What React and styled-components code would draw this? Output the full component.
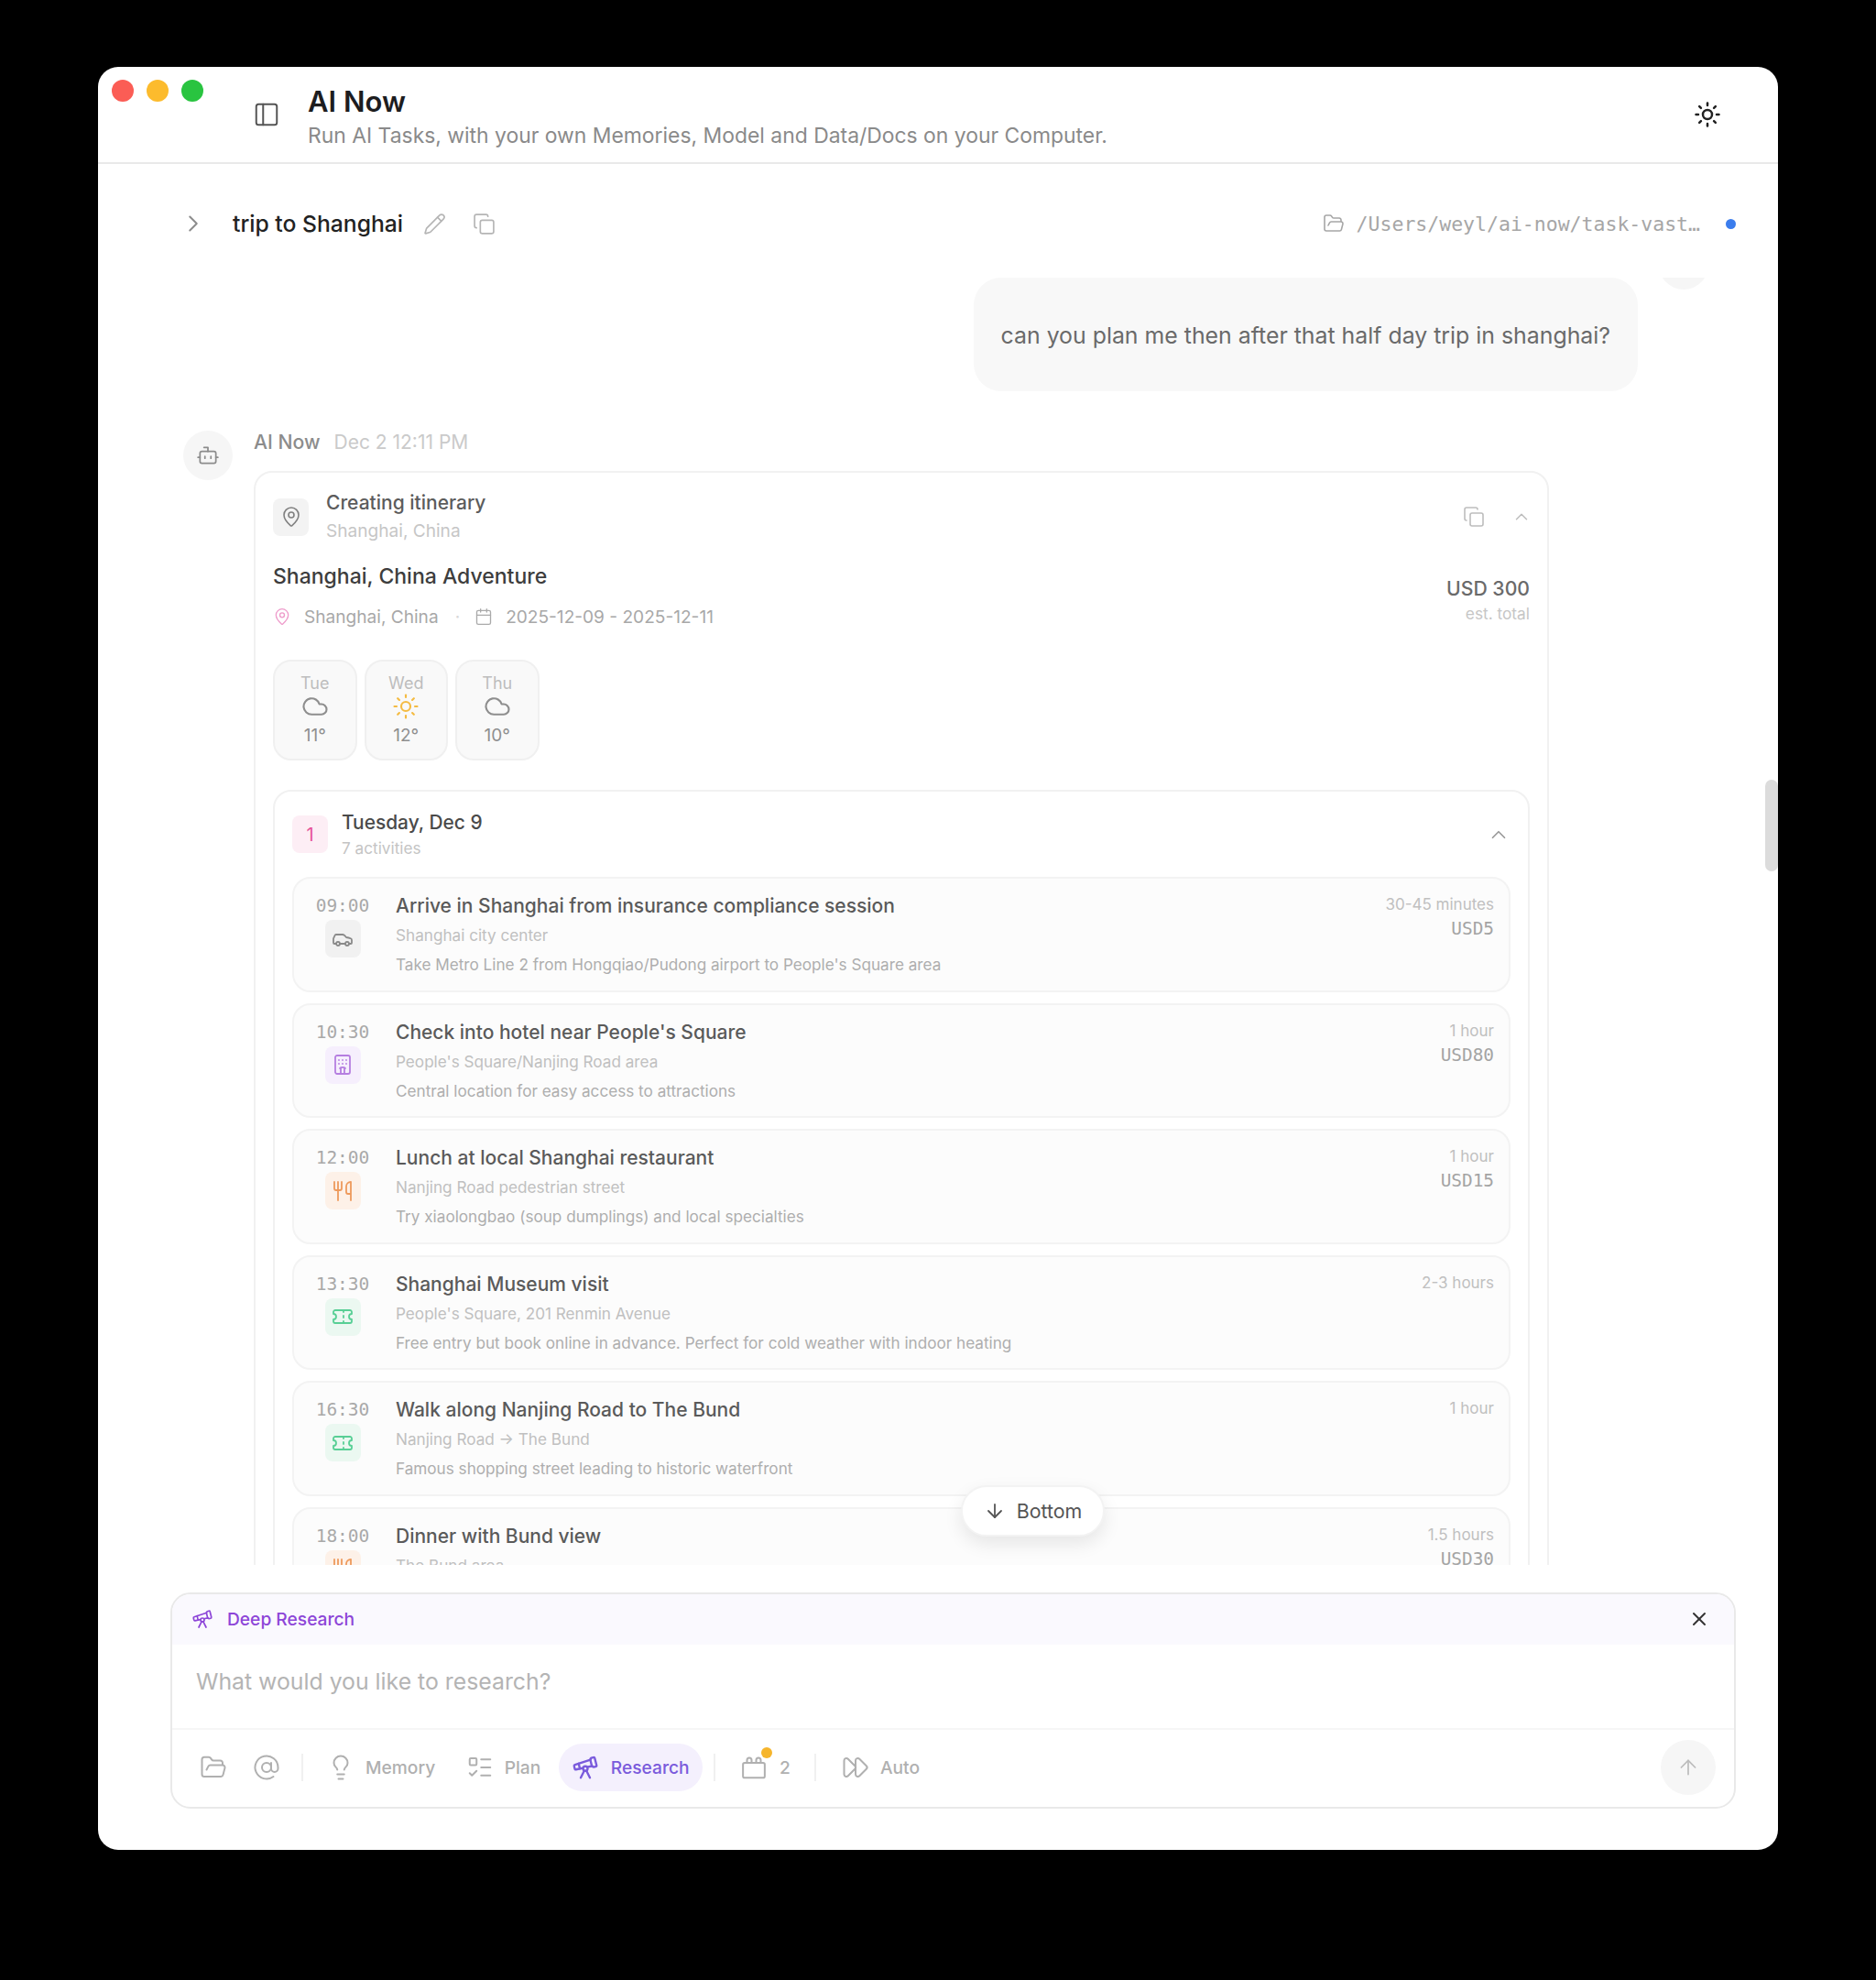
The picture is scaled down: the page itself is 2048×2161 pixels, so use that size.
import styled, { createGlobalStyle } from "styled-components";
import {
  ArrowDown,
  ArrowUp,
  AtSign,
  Bot,
  Calendar,
  Car,
  ChevronRight,
  ChevronUp,
  Cloud,
  Copy,
  FastForward,
  FolderOpen,
  Hotel,
  Lightbulb,
  ListTodo,
  MapPin,
  PanelLeft,
  Pencil,
  Sun,
  Telescope,
  Ticket,
  Utensils,
  X,
} from "lucide-react";

const MONO = `"DejaVu Sans Mono", "Liberation Mono", monospace`;

const GlobalStyle = createGlobalStyle`
  html, body {
    margin: 0;
    background: #000;
  }
  body {
    font-family: Inter, "Liberation Sans", sans-serif;
    -webkit-font-smoothing: antialiased;
  }
  * {
    box-sizing: border-box;
  }
`;

const Page = styled.div`
  width: 2048px;
  height: 2161px;
  padding: 73px 107px 142px;
`;

const Window = styled.div`
  display: flex;
  flex-direction: column;
  height: 100%;
  background: #fff;
  border-radius: 22px;
  overflow: hidden;
`;

const TopBar = styled.header`
  display: flex;
  align-items: center;
  flex: none;
  height: 106px;
  padding-right: 62px;
  border-bottom: 2px solid #e9e9e9;
`;

const Lights = styled.div`
  display: flex;
  align-self: flex-start;
  gap: 14px;
  width: 169px;
  padding: 14px 0 0 15px;
`;

const Light = styled.span`
  width: 24px;
  height: 24px;
  border-radius: 50%;
  background: ${(p) => p.$color};
`;

const SideToggle = styled.div`
  display: flex;
  width: 60px;
  color: #555;
`;

const TitleBlock = styled.div`
  flex: 1;
  padding-top: 5px;
`;

const AppTitle = styled.h1`
  margin: 0;
  font-size: 31px;
  line-height: 40px;
  font-weight: 600;
  color: #1d1d1f;
`;

const AppSubtitle = styled.p`
  margin: 0;
  font-size: 22.9px;
  line-height: 34px;
  color: #8a8a8a;
`;

const TaskBar = styled.div`
  display: flex;
  align-items: center;
  flex: none;
  height: 124px;
  padding: 6px 46px 0 89px;
`;

const TaskTitle = styled.span`
  margin-left: 28px;
  font-size: 24.7px;
  font-weight: 500;
  color: #222;
`;

const TaskTool = styled.span`
  display: flex;
  margin-left: ${(p) => p.$gap}px;
  color: #b5b5b5;
`;

const PathBox = styled.div`
  display: flex;
  align-items: center;
  gap: 13px;
  margin-left: auto;
  color: #a6a6a6;
`;

const PathText = styled.span`
  font-family: ${MONO};
  font-size: 21.5px;
`;

const StatusDot = styled.span`
  width: 11px;
  height: 11px;
  margin-left: 28px;
  border-radius: 50%;
  background: #3b7ded;
`;

const ChatArea = styled.div`
  position: relative;
  flex: none;
  height: 1405px;
`;

const Scroller = styled.div`
  height: 100%;
  padding: 0 76px 0 93px;
  overflow: hidden;
`;

const UserRow = styled.div`
  display: flex;
  justify-content: flex-end;
  gap: 23px;
`;

const Bubble = styled.div`
  display: flex;
  align-items: center;
  height: 124px;
  padding: 2px 30px 0;
  border-radius: 30px;
  background: #f8f8f8;
  font-size: 24.85px;
  color: #6a6a6a;
`;

const Avatar = styled.div`
  display: flex;
  align-items: center;
  justify-content: center;
  flex: none;
  width: 54px;
  height: 54px;
  border-radius: 50%;
  background: #f6f6f6;
  color: #8c8c8c;
`;

const UserAvatar = styled(Avatar)`
  margin-top: -41px;
`;

const BotRow = styled.div`
  display: flex;
  gap: 23px;
  margin-top: 43px;
`;

const BotBody = styled.div`
  width: 1414px;
`;

const Sender = styled.div`
  display: flex;
  align-items: center;
  gap: 15px;
  height: 30px;
  margin: -3px 0 17px;
`;

const SenderName = styled.span`
  font-size: 21.2px;
  font-weight: 500;
  color: #8c8c8c;
`;

const SenderTime = styled.span`
  font-size: 21px;
  color: #cacaca;
`;

const ItineraryCard = styled.div`
  padding: 18px 19px 0;
  border: 2px solid #f1f1f1;
  border-radius: 20px;
`;

const CardHead = styled.div`
  display: flex;
  align-items: center;
  gap: 19px;
  height: 60px;
`;

const IconBox = styled.div`
  display: flex;
  align-items: center;
  justify-content: center;
  flex: none;
  width: 39px;
  height: 41px;
  border-radius: 8px;
  background: ${(p) => p.$bg || "#f3f3f3"};
  color: ${(p) => p.$color || "#808080"};
`;

const HeadText = styled.div`
  flex: 1;
`;

const HeadTitle = styled.div`
  font-size: 21px;
  line-height: 30px;
  font-weight: 500;
  color: #5c5c5c;
`;

const HeadSub = styled.div`
  font-size: 19.1px;
  line-height: 30px;
  color: #c6c6c6;
`;

const HeadTools = styled.div`
  display: flex;
  align-items: center;
  gap: 29px;
  margin-right: -2px;
  color: #bdbdbd;
`;

const TripRow = styled.div`
  display: flex;
  justify-content: space-between;
  margin-top: 18px;
`;

const TripTitle = styled.div`
  font-size: 23px;
  line-height: 34px;
  font-weight: 500;
  color: #3d3d3d;
`;

const TripMeta = styled.div`
  display: flex;
  align-items: center;
  height: 32px;
  margin-top: 11px;
  font-size: 19.1px;
  color: #a8a8a8;
`;

const MetaDot = styled.span`
  margin: 0 16px 0 18px;
  color: #d8d8d8;
`;

const MetaIcon = styled.span`
  display: flex;
  margin-right: 14px;
  color: ${(p) => p.$color};
`;

const PriceBlock = styled.div`
  margin-top: 16px;
  text-align: right;
`;

const Price = styled.div`
  font-size: 21.2px;
  line-height: 28px;
  font-weight: 500;
  color: #6a6a6a;
`;

const PriceNote = styled.div`
  margin-top: 1px;
  font-size: 17.3px;
  line-height: 26px;
  color: #c6c6c6;
`;

const WeatherRow = styled.div`
  display: flex;
  gap: 8px;
  margin-top: 31px;
`;

const WeatherCard = styled.div`
  display: flex;
  flex-direction: column;
  align-items: center;
  width: 91.5px;
  height: 110px;
  padding-top: 13px;
  border: 2px solid #f0f0f0;
  border-radius: 20px;
  background: #f9f9f9;
`;

const WeatherDay = styled.span`
  font-size: 18px;
  line-height: 22px;
  color: #bdbdbd;
`;

const WeatherIcon = styled.span`
  display: flex;
  height: 30px;
  margin-top: -1px;
  color: ${(p) => p.$color};
`;

const WeatherTemp = styled.span`
  margin-top: 4px;
  font-size: 19px;
  line-height: 26px;
  color: #8f8f8f;
`;

const DayCard = styled.div`
  margin-top: 32px;
  padding: 0 19px;
  border: 2px solid #f1f1f1;
  border-radius: 20px;
`;

const DayHead = styled.div`
  display: flex;
  align-items: center;
  gap: 15px;
  height: 93px;
`;

const DayBadge = styled.div`
  display: flex;
  align-items: center;
  justify-content: center;
  flex: none;
  width: 39px;
  height: 41px;
  border-radius: 8px;
  background: #fdeef5;
  font-size: 20px;
  color: #e6559a;
`;

const DayText = styled.div`
  flex: 1;
`;

const DayTitle = styled.div`
  font-size: 20.9px;
  line-height: 30px;
  font-weight: 500;
  color: #4a4a4a;
`;

const DaySub = styled.div`
  font-size: 17.2px;
  line-height: 26px;
  color: #c4c4c4;
`;

const DayChevron = styled.span`
  display: flex;
  color: #9a9a9a;
`;

const ActivityList = styled.div`
  display: flex;
  flex-direction: column;
  gap: 12px;
`;

const Activity = styled.div`
  display: flex;
  gap: 28px;
  height: 125.6px;
  padding: 14px 16px 0 23px;
  border: 2px solid #f3f3f3;
  border-radius: 20px;
  background: #fcfcfc;
`;

const TimeCol = styled.div`
  display: flex;
  flex-direction: column;
  align-items: center;
  flex: none;
  width: 60px;
`;

const Time = styled.div`
  height: 32px;
  margin-bottom: -1px;
  font-family: ${MONO};
  font-size: 19.5px;
  line-height: 32px;
  color: #a9a9a9;
`;

const ActivityMain = styled.div`
  flex: 1;
  min-width: 0;
`;

const ActivityTitle = styled.div`
  font-size: 21px;
  line-height: 32px;
  font-weight: 500;
  color: #5a5a5a;
`;

const ActivityLine = styled.div`
  font-size: 17.15px;
  line-height: 32px;
  color: ${(p) => p.$color};
`;

const ActivitySide = styled.div`
  text-align: right;
`;

const Duration = styled.div`
  font-size: 17px;
  line-height: 28px;
  color: #c0c0c0;
`;

const Cost = styled.div`
  font-family: ${MONO};
  font-size: 19.4px;
  line-height: 26px;
  color: #a4a4a4;
`;

const BottomButton = styled.button`
  position: absolute;
  left: 942px;
  bottom: 31px;
  display: flex;
  align-items: center;
  justify-content: center;
  gap: 12px;
  width: 157px;
  height: 56px;
  padding: 0;
  border: 2px solid #f3f3f3;
  border-radius: 28px;
  background: #fff;
  box-shadow: 0 8px 20px rgba(0, 0, 0, 0.09);
  font-family: inherit;
  font-size: 21.4px;
  color: #555;
`;

const ScrollThumb = styled.div`
  position: absolute;
  top: 548px;
  right: 0;
  width: 14px;
  height: 100px;
  border-radius: 7px;
  background: #dcdcdc;
`;

const Composer = styled.div`
  flex: none;
  height: 236px;
  margin: 30px 46px 0 79px;
  border: 2px solid #e9e9e9;
  border-radius: 22px;
  overflow: hidden;
`;

const ModeBar = styled.div`
  display: flex;
  align-items: center;
  height: 55px;
  padding: 0 26px 2px 21px;
  background: #faf9fe;
  color: #8d46d8;
`;

const ModeLabel = styled.span`
  flex: 1;
  margin-left: 15px;
  font-size: 19.2px;
  font-weight: 500;
`;

const CloseIcon = styled.span`
  display: flex;
  color: #333;
`;

const InputArea = styled.div`
  display: flex;
  align-items: center;
  height: 93px;
  padding: 0 26px 11px;
  border-bottom: 2px solid #f6f6f6;
  font-size: 24.8px;
  color: #b4b4b4;
`;

const ToolBar = styled.div`
  display: flex;
  align-items: center;
  gap: 5.5px;
  height: 84px;
  padding: 0 20px 2px 18.5px;
`;

const IconTool = styled.span`
  display: flex;
  justify-content: center;
  width: 52.5px;
  color: #b0b0b0;
`;

const ToolDivider = styled.span`
  width: 2px;
  height: 30px;
  margin: 0 ${(p) => p.$right || 6.5}px 0 ${(p) => p.$left || 6.5}px;
  background: #f0f0f0;
`;

const Tool = styled.div`
  position: relative;
  display: flex;
  align-items: center;
  gap: ${(p) => p.$gap || 12}px;
  height: 52px;
  padding: 0 14px;
  border-radius: 26px;
  font-size: 19.2px;
  font-weight: 500;
  background: ${(p) => (p.$active ? "#f4f0fd" : "transparent")};
  color: ${(p) => (p.$active ? "#7a5bdc" : "#b0b0b0")};
`;

const ToolBadge = styled.span`
  position: absolute;
  top: 4px;
  left: 37px;
  width: 12px;
  height: 12px;
  border-radius: 50%;
  background: #f6b52c;
`;

const SendButton = styled.div`
  display: flex;
  align-items: center;
  justify-content: center;
  width: 60px;
  height: 60px;
  margin-left: auto;
  border-radius: 50%;
  background: #f6f6f6;
  color: #bcbcbc;
`;

const TasksIcon = ({ size }) => (
  <svg width={size} height={size} viewBox="0 0 24 24" fill="none" stroke="currentColor" strokeWidth="1.6" strokeLinecap="round" strokeLinejoin="round">
    <rect x="2.5" y="8" width="19" height="13" rx="1.5" />
    <path d="M6 8V5.5a2 2 0 0 1 4 0V8" />
    <path d="M14 8V5.5a2 2 0 0 1 4 0V8" />
  </svg>
);

const kinds = {
  transport: { Icon: Car, bg: "#f1f1f1", color: "#8a8a8a" },
  hotel: { Icon: Hotel, bg: "#f6effd", color: "#b57ee0" },
  food: { Icon: Utensils, bg: "#fdf1e8", color: "#ee9a5c" },
  sight: { Icon: Ticket, bg: "#ebf8f1", color: "#58cf95" },
};

const activities = [
  {
    time: "09:00",
    kind: "transport",
    title: "Arrive in Shanghai from insurance compliance session",
    place: "Shanghai city center",
    note: "Take Metro Line 2 from Hongqiao/Pudong airport to People's Square area",
    duration: "30-45 minutes",
    cost: "USD5",
  },
  {
    time: "10:30",
    kind: "hotel",
    title: "Check into hotel near People's Square",
    place: "People's Square/Nanjing Road area",
    note: "Central location for easy access to attractions",
    duration: "1 hour",
    cost: "USD80",
  },
  {
    time: "12:00",
    kind: "food",
    title: "Lunch at local Shanghai restaurant",
    place: "Nanjing Road pedestrian street",
    note: "Try xiaolongbao (soup dumplings) and local specialties",
    duration: "1 hour",
    cost: "USD15",
  },
  {
    time: "13:30",
    kind: "sight",
    title: "Shanghai Museum visit",
    place: "People's Square, 201 Renmin Avenue",
    note: "Free entry but book online in advance. Perfect for cold weather with indoor heating",
    duration: "2-3 hours",
  },
  {
    time: "16:30",
    kind: "sight",
    title: "Walk along Nanjing Road to The Bund",
    place: "Nanjing Road → The Bund",
    note: "Famous shopping street leading to historic waterfront",
    duration: "1 hour",
  },
  {
    time: "18:00",
    kind: "food",
    title: "Dinner with Bund view",
    place: "The Bund area",
    note: "",
    duration: "1.5 hours",
    cost: "USD30",
  },
];

const weather = [
  { day: "Tue", Icon: Cloud, color: "#8e8e8e", temp: "11°" },
  { day: "Wed", Icon: Sun, color: "#f4bb42", temp: "12°" },
  { day: "Thu", Icon: Cloud, color: "#8e8e8e", temp: "10°" },
];

export default function App() {
  return (
    <Page>
      <GlobalStyle />
      <Window>
        <TopBar>
          <Lights>
            <Light $color="#fb5d55" />
            <Light $color="#fcbb2d" />
            <Light $color="#29c440" />
          </Lights>
          <SideToggle>
            <PanelLeft size={30} strokeWidth={1.6} />
          </SideToggle>
          <TitleBlock>
            <AppTitle>AI Now</AppTitle>
            <AppSubtitle>Run AI Tasks, with your own Memories, Model and Data/Docs on your Computer.</AppSubtitle>
          </TitleBlock>
          <Sun size={30} strokeWidth={2} color="#222" />
        </TopBar>

        <TaskBar>
          <ChevronRight size={30} strokeWidth={1.6} color="#8c8c8c" />
          <TaskTitle>trip to Shanghai</TaskTitle>
          <TaskTool $gap={22}>
            <Pencil size={25} strokeWidth={1.6} />
          </TaskTool>
          <TaskTool $gap={29}>
            <Copy size={25} strokeWidth={1.6} />
          </TaskTool>
          <PathBox>
            <FolderOpen size={24} strokeWidth={1.6} />
            <PathText>/Users/weyl/ai-now/task-vast…</PathText>
          </PathBox>
          <StatusDot />
        </TaskBar>

        <ChatArea>
          <Scroller>
            <UserRow>
              <Bubble>can you plan me then after that half day trip in shanghai?</Bubble>
              <UserAvatar />
            </UserRow>

            <BotRow>
              <Avatar>
                <Bot size={26} strokeWidth={1.6} />
              </Avatar>
              <BotBody>
                <Sender>
                  <SenderName>AI Now</SenderName>
                  <SenderTime>Dec 2 12:11 PM</SenderTime>
                </Sender>
                <ItineraryCard>
                  <CardHead>
                    <IconBox>
                      <MapPin size={24} strokeWidth={1.6} />
                    </IconBox>
                    <HeadText>
                      <HeadTitle>Creating itinerary</HeadTitle>
                      <HeadSub>Shanghai, China</HeadSub>
                    </HeadText>
                    <HeadTools>
                      <Copy size={24} strokeWidth={1.6} />
                      <ChevronUp size={22} strokeWidth={1.6} />
                    </HeadTools>
                  </CardHead>

                  <TripRow>
                    <div>
                      <TripTitle>Shanghai, China Adventure</TripTitle>
                      <TripMeta>
                        <MetaIcon $color="#ee9ccb">
                          <MapPin size={20} strokeWidth={1.6} />
                        </MetaIcon>
                        Shanghai, China
                        <MetaDot>·</MetaDot>
                        <MetaIcon $color="#aaa">
                          <Calendar size={20} strokeWidth={1.6} />
                        </MetaIcon>
                        2025-12-09 - 2025-12-11
                      </TripMeta>
                    </div>
                    <PriceBlock>
                      <Price>USD 300</Price>
                      <PriceNote>est. total</PriceNote>
                    </PriceBlock>
                  </TripRow>

                  <WeatherRow>
                    {weather.map(({ day, Icon, color, temp }) => (
                      <WeatherCard key={day}>
                        <WeatherDay>{day}</WeatherDay>
                        <WeatherIcon $color={color}>
                          <Icon size={30} strokeWidth={1.7} />
                        </WeatherIcon>
                        <WeatherTemp>{temp}</WeatherTemp>
                      </WeatherCard>
                    ))}
                  </WeatherRow>

                  <DayCard>
                    <DayHead>
                      <DayBadge>1</DayBadge>
                      <DayText>
                        <DayTitle>Tuesday, Dec 9</DayTitle>
                        <DaySub>7 activities</DaySub>
                      </DayText>
                      <DayChevron>
                        <ChevronUp size={26} strokeWidth={1.6} />
                      </DayChevron>
                    </DayHead>
                    <ActivityList>
                      {activities.map((a) => {
                        const { Icon, bg, color } = kinds[a.kind];
                        return (
                          <Activity key={a.time}>
                            <TimeCol>
                              <Time>{a.time}</Time>
                              <IconBox $bg={bg} $color={color}>
                                <Icon size={24} strokeWidth={1.8} />
                              </IconBox>
                            </TimeCol>
                            <ActivityMain>
                              <ActivityTitle>{a.title}</ActivityTitle>
                              <ActivityLine $color="#c0c0c0">{a.place}</ActivityLine>
                              <ActivityLine $color="#aeaeae">{a.note}</ActivityLine>
                            </ActivityMain>
                            <ActivitySide>
                              <Duration>{a.duration}</Duration>
                              {a.cost && <Cost>{a.cost}</Cost>}
                            </ActivitySide>
                          </Activity>
                        );
                      })}
                    </ActivityList>
                  </DayCard>
                </ItineraryCard>
              </BotBody>
            </BotRow>
          </Scroller>
          <BottomButton>
            <ArrowDown size={24} strokeWidth={1.8} />
            Bottom
          </BottomButton>
          <ScrollThumb />
        </ChatArea>

        <Composer>
          <ModeBar>
            <Telescope size={24} strokeWidth={1.7} />
            <ModeLabel>Deep Research</ModeLabel>
            <CloseIcon>
              <X size={24} strokeWidth={2} />
            </CloseIcon>
          </ModeBar>
          <InputArea>What would you like to research?</InputArea>
          <ToolBar>
            <IconTool>
              <FolderOpen size={30} strokeWidth={1.6} />
            </IconTool>
            <IconTool>
              <AtSign size={30} strokeWidth={1.6} />
            </IconTool>
            <ToolDivider />
            <Tool>
              <Lightbulb size={30} strokeWidth={1.6} />
              Memory
            </Tool>
            <Tool>
              <ListTodo size={30} strokeWidth={1.6} />
              Plan
            </Tool>
            <Tool $active $gap={13}>
              <Telescope size={30} strokeWidth={1.9} />
              Research
            </Tool>
            <ToolDivider $left={7} $right={7} />
            <Tool $gap={13.5}>
              <TasksIcon size={30} />
              <ToolBadge />
              2
            </Tool>
            <ToolDivider $left={7} $right={8} />
            <Tool>
              <FastForward size={30} strokeWidth={1.6} />
              Auto
            </Tool>
            <SendButton>
              <ArrowUp size={26} strokeWidth={1.6} />
            </SendButton>
          </ToolBar>
        </Composer>
      </Window>
    </Page>
  );
}
